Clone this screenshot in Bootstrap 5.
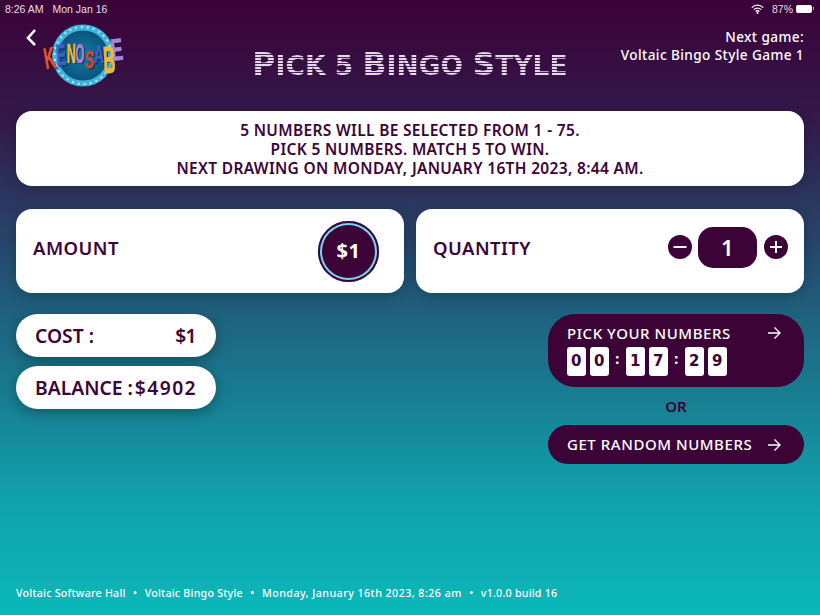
<!DOCTYPE html>
<html lang="en">
<head>
<meta charset="utf-8">
<title>Pick 5 Bingo Style</title>
<link href="https://cdn.jsdelivr.net/npm/bootstrap@5.3.0/dist/css/bootstrap.min.css" rel="stylesheet">
<style>
html,body{height:100%}
body{width:820px;height:615px;overflow:hidden;color:#3b0336;font-family:"Noto Sans","Open Sans",sans-serif;background:linear-gradient(180deg,#3b0138 0%,#331a4b 20%,#1f5f7c 50%,#10a3ac 82%,#0bb8b9 100%)}
.stage{width:820px;height:615px}
.statusline{height:17px;padding:0 6px 0 5px;font-family:"Liberation Sans",sans-serif;font-size:10.5px;line-height:16px;color:#eadfe9}
.statusline .dategap{margin-left:9px}
.batt{width:16px;height:8px;border-radius:2px;background:#fff;margin:0 0 0 3px}
.batt-tip{width:1px;height:3px;background:#aaa;margin-left:1px}
.headrow{height:94px;padding:0 16px}
.backlogo{width:230px;padding-top:7px}
.logosvg{margin-left:-1px;margin-top:-1px}
.logoletters{filter:drop-shadow(1px 1px 0 rgba(20,0,30,.55))}
.title{font-family:"DejaVu Sans",sans-serif;font-weight:700;font-size:26.5px;line-height:36px;letter-spacing:.05px;margin-top:29px;white-space:nowrap;color:transparent;background:repeating-linear-gradient(180deg,#e6d9ea 0 2px,#4a2058 2px 3px);-webkit-background-clip:text;background-clip:text}
.title .bigcap{font-size:31.5px}
.nextgame{width:230px;text-align:right;color:#fff;font-size:13.6px;line-height:17.5px;font-weight:500;padding-top:11px;letter-spacing:.4px}
.whitecard{background:#fff;box-shadow:0 3px 14px rgba(0,0,0,.22);border-radius:16px}
.infocard{margin:0 16px;height:75px;padding-top:2px;font-size:15.5px;line-height:18.7px;font-weight:600;letter-spacing:.33px}
.pickrow{margin:23px 16px 0;height:84px}
.pickcard{padding:0 16px 0 17px;font-size:18.5px;font-weight:600;letter-spacing:.45px}
.raised{margin-top:-6px}
.amountdot{width:61px;height:61px;border-radius:50%;background:#3b0336;color:#fff;font-size:20px;font-weight:700;margin-right:9px;box-shadow:inset 0 0 0 2px #3b0336,inset 0 0 0 4px #79d6f2}
.stepbtn{width:24px;height:24px;display:block}
.stepgroup{margin-top:-8px}
.qtybox{width:59px;height:41px;background:#3b0336;color:#fff;border-radius:15px;font-size:22px;font-weight:600;margin:0 7px 0 6px}
.lowerrow{margin:21px 16px 0}
.infopill{width:200px;height:43px;border-radius:22px;background:#fff;box-shadow:0 4px 14px rgba(0,0,0,.3);padding:1px 20px 0 19px;font-size:19.3px;font-weight:600}
.infopill+.infopill{margin-top:9px}
.pillcolon{margin-left:5px}
.pillshort{letter-spacing:-.6px}
.pillmoney{letter-spacing:1.4px;margin-right:-1px}
.actions{width:256px}
.actionbtn{background:#3b0336;color:#fff;padding:0 20px 0 19px;letter-spacing:.55px;font-size:15px;font-weight:500}
.pickbtn{height:73px;border-radius:27px;padding-top:8px}
.randombtn{height:39px;border-radius:20px}
.orlabel{height:38px;font-size:15px;font-weight:600;line-height:38px;text-align:center}
.arrowicon{width:15px;height:14px;display:block;margin-right:2px}
.digit{width:19px;height:29px;background:#fff;color:#3b0336;border-radius:3px;font-family:"DejaVu Sans",sans-serif;font-size:15px;font-weight:700;line-height:29px;text-align:center;margin-right:4px}
.digit.lastof{margin-right:0}
.digitcolon{width:17px;text-align:center;font-size:14px;font-weight:800;line-height:24px;color:#fff}
.digits{margin-top:2px}
.footline{margin-top:auto;padding:0 16px 15px;color:#fff;font-size:10.7px;line-height:14px;font-weight:500;letter-spacing:.22px;white-space:nowrap;gap:7px}
.footline .footdot{width:5px;text-align:center}
.footline .footdate{letter-spacing:.45px}
</style>
</head>
<body>
<div class="stage d-flex flex-column">
  <div class="statusline d-flex align-items-center">
    <span>8:26 AM</span><span class="dategap">Mon Jan 16</span>
    <span class="ms-auto d-flex align-items-center">
      <svg width="13" height="10" viewBox="0 0 13 10" class="me-2"><path d="M.8 3.600a8 8 0 0 1 11.400 0M2.800 5.600a5.200 5.200 0 0 1 7.400 0M4.700 7.500a2.500 2.500 0 0 1 3.600 0" fill="none" stroke="#fff" stroke-width="1.300"/><circle cx="6.500" cy="9" r="1" fill="#fff"/></svg>
      <span>87%</span><span class="batt"></span><span class="batt-tip"></span>
    </span>
  </div>
  <div class="headrow d-flex justify-content-between align-items-start">
    <div class="backlogo d-flex align-items-start">
      <svg width="14" height="20" viewBox="0 0 14 20" class="mt-1 ms-2"><path d="M11 2 4 10l7 7" fill="none" stroke="#fff" stroke-width="2.600"/></svg>
      <svg width="92" height="68" viewBox="0 0 92 68" class="logosvg" font-family="Liberation Sans, sans-serif" font-weight="700">
        <defs><radialGradient id="g1" cx="50%" cy="50%" r="50%"><stop offset="0" stop-color="#0f7ea8"/><stop offset="1" stop-color="#0b4e78"/></radialGradient></defs>
        <circle cx="46" cy="32.500" r="28" fill="url(#g1)" stroke="#3fb3dc" stroke-width="6"/>
        <circle cx="46" cy="32.500" r="28.500" fill="none" stroke="#bdeefb" stroke-width="2" stroke-dasharray="2 4"/>
        <g class="logoletters" font-size="20" text-anchor="middle" stroke-width=".5">
          <text transform="translate(81 37) rotate(-6) scale(.9 1.540)" fill="#a887d8" stroke="#a887d8">E</text>
          <text transform="translate(14.500 45) rotate(-10) scale(.76 1.470)" fill="#e5512d" stroke="#e5512d">K</text>
          <text transform="translate(25 42) rotate(-5) scale(.75 1.470)" fill="#3b62c8" stroke="#3b62c8">E</text>
          <text transform="translate(34.500 40) scale(.62 1.400)" fill="#f0b93a" stroke="#f0b93a">N</text>
          <text transform="translate(43 40) scale(.58 1.400)" fill="#a887d8" stroke="#a887d8">O</text>
          <text transform="translate(52.500 45) rotate(3) scale(.68 1.200)" fill="#d9472f" stroke="#d9472f">S</text>
          <text transform="translate(62 40) scale(.7 1.200)" fill="#3b62c8" stroke="#3b62c8">A</text>
          <text transform="translate(73 50) rotate(-3) scale(.83 1.900)" fill="#f0b93a" stroke="#f0b93a">B</text>
        </g>
      </svg>
    </div>
    <div class="title"><span class="bigcap">P</span>ICK 5 <span class="bigcap">B</span>INGO <span class="bigcap">S</span>TYLE</div>
    <div class="nextgame">Next game:<br>Voltaic Bingo Style Game 1</div>
  </div>
  <div class="whitecard infocard d-flex flex-column justify-content-center text-center">
    <div>5 NUMBERS WILL BE SELECTED FROM 1 - 75.</div>
    <div>PICK 5 NUMBERS. MATCH 5 TO WIN.</div>
    <div>NEXT DRAWING ON MONDAY, JANUARY 16TH 2023, 8:44 AM.</div>
  </div>
  <div class="pickrow d-flex gap-2 justify-content-between">
    <div class="whitecard pickcard flex-fill d-flex align-items-center justify-content-between me-1 w-50">
      <span class="raised">AMOUNT</span>
      <span class="amountdot d-flex align-items-center justify-content-center">$1</span>
    </div>
    <div class="whitecard pickcard flex-fill d-flex align-items-center justify-content-between w-50">
      <span class="raised">QUANTITY</span>
      <span class="stepgroup d-flex align-items-center">
        <svg class="stepbtn" viewBox="0 0 24 24"><circle cx="12" cy="12" r="12" fill="#3b0336"/><path d="M5.500 12h13" stroke="#fff" stroke-width="2"/></svg>
        <span class="qtybox d-flex align-items-center justify-content-center">1</span>
        <svg class="stepbtn" viewBox="0 0 24 24"><circle cx="12" cy="12" r="12" fill="#3b0336"/><path d="M6 12h12M12 6v12" stroke="#fff" stroke-width="2"/></svg>
      </span>
    </div>
  </div>
  <div class="lowerrow d-flex justify-content-between align-items-start">
    <div>
      <div class="infopill d-flex align-items-center justify-content-between"><span>COST<span class="pillcolon">:</span></span><span class="pillshort">$1</span></div>
      <div class="infopill d-flex align-items-center justify-content-between"><span>BALANCE<span class="pillcolon">:</span></span><span class="pillmoney">$4902</span></div>
    </div>
    <div class="actions">
      <div class="actionbtn pickbtn">
        <div class="d-flex justify-content-between align-items-center">
          <span>PICK YOUR NUMBERS</span>
          <svg class="arrowicon" viewBox="0 0 15 14"><path d="M1 7h12M7.500 1.500 13 7l-5.500 5.500" fill="none" stroke="#fff" stroke-width="1.400"/></svg>
        </div>
        <div class="digits d-flex">
          <span class="digit">0</span><span class="digit lastof">0</span><span class="digitcolon">:</span>
          <span class="digit">1</span><span class="digit lastof">7</span><span class="digitcolon">:</span>
          <span class="digit">2</span><span class="digit lastof">9</span>
        </div>
      </div>
      <div class="orlabel">OR</div>
      <div class="actionbtn randombtn d-flex justify-content-between align-items-center">
        <span>GET RANDOM NUMBERS</span>
        <svg class="arrowicon" viewBox="0 0 15 14"><path d="M1 7h12M7.500 1.500 13 7l-5.500 5.500" fill="none" stroke="#fff" stroke-width="1.400"/></svg>
      </div>
    </div>
  </div>
  <div class="footline d-flex">
    <span>Voltaic Software Hall</span><span class="footdot">•</span><span>Voltaic Bingo Style</span><span class="footdot">•</span><span class="footdate">Monday, January 16th 2023, 8:26 am</span><span class="footdot">•</span><span>v1.0.0 build 16</span>
  </div>
</div>
</body>
</html>
